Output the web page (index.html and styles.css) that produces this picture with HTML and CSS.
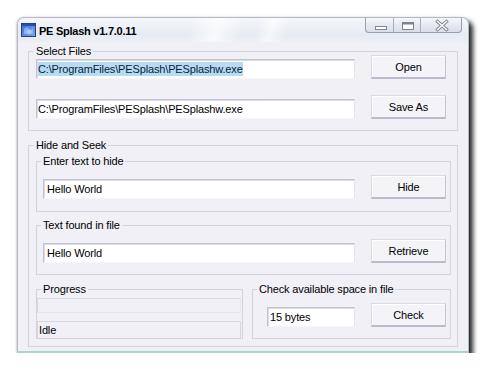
FILE: index.html
```html
<!DOCTYPE html>
<html>
<head>
<meta charset="utf-8">
<link rel="stylesheet" href="styles.css">
</head>
<body>
<div class="window">
  <div class="titlebar">
    <svg class="appicon" width="15" height="14" viewBox="0 0 15 14">
      <defs>
        <linearGradient id="ig" x1="0" y1="0" x2="1" y2="1">
          <stop offset="0" stop-color="#3f6fd0"/>
          <stop offset="1" stop-color="#7aa4ee"/>
        </linearGradient>
      </defs>
      <rect x="0.5" y="0.5" width="14" height="13" fill="url(#ig)" stroke="#24408a"/>
      <rect x="1" y="1" width="13" height="2" fill="#2a4fa8"/>
      <path d="M3 6 L6 4 L9 7 L12 5 L12 11 L3 11 Z" fill="#9cc0f5" opacity="0.7"/>
      <path d="M5 9 L8 6 L11 9 L8 12 Z" fill="#c4d9fa" opacity="0.6"/>
    </svg>
    <span class="title">PE Splash v1.7.0.11</span>
    <div class="caps">
      <div class="cap cap-min">
        <svg width="27" height="14" viewBox="0 0 27 14"><rect x="9.5" y="8.5" width="11" height="3" fill="#fff" stroke="#7d8594"/></svg>
      </div>
      <div class="cap cap-max">
        <svg width="26" height="14" viewBox="0 0 26 14"><rect x="8.5" y="4.5" width="11" height="7" fill="#fff" stroke="#7d8594"/><rect x="9" y="5" width="10" height="1.5" fill="#7d8594"/></svg>
      </div>
      <div class="cap cap-close">
        <svg width="40" height="14" viewBox="0 0 40 14"><path d="M16.5 3.5 L25.5 11.5 M25.5 3.5 L16.5 11.5" stroke="#7d8594" stroke-width="3.2" stroke-linecap="square"/><path d="M16.5 3.5 L25.5 11.5 M25.5 3.5 L16.5 11.5" stroke="#fff" stroke-width="1.4" stroke-linecap="square"/></svg>
      </div>
    </div>
  </div>
  <div class="client">
    <fieldset class="group files">
      <legend>Select Files</legend>
      <div class="row">
        <div class="textbox path"><span class="sel">C:\ProgramFiles\PESplash\PESplashw.exe</span></div>
        <button class="btn">Open</button>
      </div>
      <div class="row row-second">
        <div class="textbox path">C:\ProgramFiles\PESplash\PESplashw.exe</div>
        <button class="btn">Save As</button>
      </div>
    </fieldset>
    <fieldset class="group seek">
      <legend>Hide and Seek</legend>
      <fieldset class="group sub sub-first">
        <legend>Enter text to hide</legend>
        <div class="row">
          <div class="textbox text">Hello World</div>
          <button class="btn">Hide</button>
        </div>
      </fieldset>
      <fieldset class="group sub sub-second">
        <legend>Text found in file</legend>
        <div class="row">
          <div class="textbox text">Hello World</div>
          <button class="btn">Retrieve</button>
        </div>
      </fieldset>
      <div class="bottom">
        <fieldset class="group progress">
          <legend>Progress</legend>
          <div class="bar"></div>
          <div class="status">Idle</div>
        </fieldset>
        <fieldset class="group check">
          <legend>Check available space in file</legend>
          <div class="row">
            <div class="textbox bytes">15 bytes</div>
            <button class="btn">Check</button>
          </div>
        </fieldset>
      </div>
    </fieldset>
  </div>
</div>
</body>
</html>
```
FILE: styles.css
```css
* { box-sizing: border-box; }

body {
  margin: 0;
  background: #ffffff;
  font-family: "Liberation Sans", Arial, sans-serif;
  font-size: 11px;
  letter-spacing: -0.15px;
  color: #000;
}

.window {
  margin: 17px 0 0 17px;
  width: 452px;
  height: 336px;
  background: #f0f0f6;
  border: 1px solid #b3b9c5;
  border-bottom: 2px solid #a8d6cc;
  border-radius: 7px 7px 0 0;
  box-shadow: 4px 4px 5px rgba(0, 0, 0, 0.85), -1px 0 2px rgba(0, 0, 0, 0.15);
  display: flex;
  flex-direction: column;
}

.titlebar {
  height: 24px;
  display: flex;
  align-items: flex-start;
  padding-left: 3px;
  border-radius: 6px 6px 0 0;
  background:
    linear-gradient(105deg, rgba(255,255,255,0) 38%, rgba(255,255,255,0.7) 44%, rgba(255,255,255,0) 50%, rgba(255,255,255,0) 53%, rgba(255,255,255,0.6) 56%, rgba(255,255,255,0) 60%),
    linear-gradient(#f4f6fa, #e6eaf2 70%, #eceff5);
}

.appicon {
  margin-top: 5px;
  flex: none;
}

.title {
  margin-left: 3px;
  margin-top: 7px;
  font-weight: bold;
  font-size: 11px;
  letter-spacing: -0.25px;
  line-height: 13px;
  color: #000;
}

.caps {
  margin-left: auto;
  margin-right: 6px;
  display: flex;
  height: 15px;
  border: 1px solid #97a0ae;
  border-top: none;
  border-radius: 0 0 4px 4px;
  overflow: hidden;
  background: linear-gradient(#f6f8fb, #e4e8ef 55%, #d9dee7);
}

.cap { display: flex; height: 14px; }
.cap svg { display: block; }
.cap-min, .cap-max { border-right: 1px solid #a7afbc; }

.client {
  flex: 1;
  padding: 0 10px;
}

.group {
  margin: 0;
  min-width: 0;
  border: 1px solid #d3d3de;
}

.group > legend {
  padding: 0 2px;
  margin-left: -2px;
  line-height: 7px;
}

.files {
  margin-top: 6px;
  padding: 0 11px 11px 7px;
}

.row {
  display: flex;
  align-items: flex-end;
  gap: 16px;
}

.row-second { margin-top: 16px; }

.textbox {
  height: 20px;
  background: #fff;
  border: 1px solid;
  border-color: #c2c2d2 #e4e4ec #f6f6fa #c2c2d2;
  box-shadow: inset 1px 1px 0 #dcdce6;
  padding: 0 2px 0 1px;
  line-height: 19px;
  white-space: nowrap;
  overflow: hidden;
}

.path { width: 319px; }
.text { width: 312px; padding-left: 3px; }
.bytes { width: 88px; padding-left: 2px; }

.sel {
  background: #b6dcf2;
  color: #0a1a3a;
  padding: 1px 0;
}

.btn {
  width: 75px;
  height: 24px;
  padding: 0;
  margin: 0;
  font: inherit;
  letter-spacing: inherit;
  color: #000;
  background: #f3f3f8;
  border: 1px solid #dadae4;
  border-right-color: #c4c4d3;
  border-bottom: 2px solid #bbbbcd;
  box-shadow: inset 1px 1px 0 #ffffff;
}

.seek {
  margin-top: 11px;
  padding: 9px 6px 7px 7px;
}

.sub { padding: 10px 4px 12px 6px; }
.sub-second { margin-top: 10px; padding-bottom: 11px; }

.bottom {
  margin-top: 11px;
  display: flex;
  gap: 9px;
}

.progress {
  width: 207px;
  padding: 0;
}

.progress > legend { margin-left: 4px; }

.bar {
  margin-top: 5px;
  width: 204px;
  height: 15px;
  border: 1px solid #d6d6e0;
  border-right-color: #e6e6ee;
  border-bottom-color: #e6e6ee;
}

.status {
  margin-top: 8px;
  width: 204px;
  height: 17px;
  border: 1px solid #d6d6e0;
  border-bottom: none;
  padding-left: 1px;
  line-height: 16px;
}

.check {
  width: 199px;
  padding: 10px 4px 11px 14px;
}

.check > legend { margin-left: -10px; }
```
